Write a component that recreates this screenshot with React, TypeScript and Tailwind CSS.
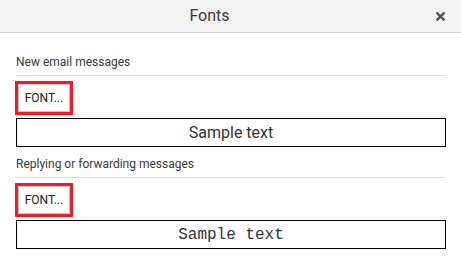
import React from 'react';

function Section({ label, mono }: { label: string; mono?: boolean }) {
  return (
    <div className="flex flex-col">
      <div className="text-[12px] leading-[16px] text-[#3a3a3a]">{label}</div>
      <div className="mt-[5px] h-px bg-[#dcdcdc]" />
      <div className="mt-[8px] flex">
        <button className="ml-[2px] h-[28px] w-[52px] border border-[#c8c8c8] bg-white text-[12px] text-[#222] outline-[3px] outline-[#ee1c25] outline-offset-0 outline-solid">
          FONT...
        </button>
      </div>
      <div
        className={`mt-[6px] flex h-[29px] items-center justify-center border border-black text-[#333] ${
          mono ? "font-['Liberation_Mono',monospace] text-[16px]" : 'text-[16px]'
        }`}
      >
        Sample text
      </div>
    </div>
  );
}

export default function App() {
  return (
    <div className="h-[270px] w-[461px] bg-white font-['Roboto',sans-serif]">
      <div className="flex h-[33px] items-center border-b border-[#cfcfcf] bg-[#f4f4f4]">
        <div className="flex-1 text-center text-[16px] text-[#3a3a3a]">Fonts</div>
        <button className="flex w-[42px] items-center justify-center text-[#555]" aria-label="Close">
          <svg width="9" height="9" viewBox="0 0 9 9">
            <path d="M1.3 1.3 L7.7 7.7 M7.7 1.3 L1.3 7.7" stroke="currentColor" strokeWidth="2.4" strokeLinecap="square" />
          </svg>
        </button>
      </div>
      <div className="flex flex-col gap-[9px] pl-[16px] pr-[15px] pt-[21px]">
        <Section label="New email messages" />
        <Section label="Replying or forwarding messages" mono />
      </div>
    </div>
  );
}
